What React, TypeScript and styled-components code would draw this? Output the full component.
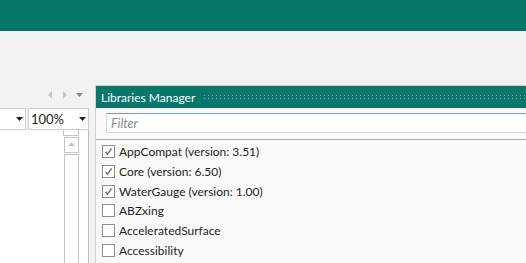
import * as React from 'react'
import styled, { createGlobalStyle } from 'styled-components'

const libraries = [
  { name: 'AppCompat (version: 3.51)', checked: true },
  { name: 'Core (version: 6.50)', checked: true },
  { name: 'WaterGauge (version: 1.00)', checked: true },
  { name: 'ABZxing', checked: false },
  { name: 'AcceleratedSurface', checked: false },
  { name: 'Accessibility', checked: false }
]

const Check: React.FC = () => (
  <svg width="11" height="11" viewBox="0 0 11 11">
    <path d="M2.5 5.8 L4.5 8.2 L8.6 2.4" fill="none" stroke="#777777" strokeWidth="1.6" />
  </svg>
)

const Triangle: React.FC<{ dir: 'left' | 'right' | 'down' | 'up'; color: string; size?: number }> = ({
  dir,
  color,
  size = 7
}) => {
  const pts = {
    left: '5,0 5,8 1,4',
    right: '1,0 1,8 5,4',
    down: '0,2 7,2 3.5,6',
    up: '0,5 7,5 3.5,1.5'
  }[dir]
  return (
    <svg width={size} height="8" viewBox={`0 0 ${size} 8`}>
      <polygon points={pts} fill={color} />
    </svg>
  )
}

const App: React.FC = () => {
  return (
    <>
      <Global />
      <Page>
        <Header />
        <Body>
          <LeftColumn>
            <NavRow>
              <NavButton>
                <Triangle dir="left" color="#c6c6c6" size={6} />
              </NavButton>
              <NavButton>
                <Triangle dir="right" color="#c6c6c6" size={6} />
              </NavButton>
              <NavButton>
                <Triangle dir="down" color="#8a8a8a" />
              </NavButton>
            </NavRow>
            <ComboRow>
              <Combo grow>
                <ComboText />
                <Triangle dir="down" color="#1e1e1e" />
              </Combo>
              <Combo>
                <ComboText>100%</ComboText>
                <Triangle dir="down" color="#1e1e1e" />
              </Combo>
            </ComboRow>
            <Editor>
              <ScrollBar>
                <ScrollGrip />
                <ScrollButton>
                  <Triangle dir="up" color="#c2c2c2" />
                </ScrollButton>
                <ScrollTrack />
              </ScrollBar>
            </Editor>
          </LeftColumn>
          <Panel>
            <TitleBar>
              <Title>Libraries Manager</Title>
              <Grip />
            </TitleBar>
            <FilterArea>
              <FilterInput placeholder="Filter" />
            </FilterArea>
            <List>
              {libraries.map((lib) => (
                <Item key={lib.name}>
                  <Box>{lib.checked && <Check />}</Box>
                  <ItemLabel>{lib.name}</ItemLabel>
                </Item>
              ))}
            </List>
          </Panel>
        </Body>
      </Page>
    </>
  )
}

const Global = createGlobalStyle`
  html, body {
    margin: 0;
    padding: 0;
    overflow: hidden;
  }
  body {
    font-family: Lato, "Noto Sans", sans-serif;
  }
`

const Page = styled.div`
  width: 526px;
  height: 263px;
  display: flex;
  flex-direction: column;
  background: #f2f2f2;
  overflow: hidden;
`

const Header = styled.div`
  height: 31px;
  background: #08766a;
  flex-shrink: 0;
`

const Body = styled.div`
  flex: 1;
  display: flex;
  padding-top: 54px;
  min-height: 0;
`

const LeftColumn = styled.div`
  width: 89px;
  display: flex;
  flex-direction: column;
  flex-shrink: 0;
`

const NavRow = styled.div`
  height: 19px;
  display: flex;
  justify-content: flex-end;
  align-items: center;
  padding-right: 2px;
`

const NavButton = styled.div`
  width: 15px;
  height: 15px;
  display: flex;
  align-items: center;
  justify-content: center;
`

const ComboRow = styled.div`
  margin-top: 4px;
  height: 22px;
  display: flex;
  gap: 2px;
  margin-left: -2px;
`

const Combo = styled.div<{ grow?: boolean }>`
  flex: ${(p) => (p.grow ? 1 : '0 0 61px')};
  height: 22px;
  box-sizing: border-box;
  border: 1px solid #cccccc;
  background: #ffffff;
  display: flex;
  align-items: center;
  padding: 0 2px;
`

const ComboText = styled.span`
  flex: 1;
  font-size: 13px;
  color: #1e1e1e;
`

const Editor = styled.div`
  flex: 1;
  background: #ffffff;
  border-right: 1px solid #bdbdbd;
  display: flex;
  justify-content: flex-end;
  padding-right: 9px;
`

const ScrollBar = styled.div`
  width: 16px;
  display: flex;
  flex-direction: column;
  align-items: center;
`

const ScrollGrip = styled.div`
  width: 16px;
  height: 6px;
  box-sizing: border-box;
  border: 1px solid #c4c4c4;
  border-top: none;
  background: #ffffff;
`

const ScrollButton = styled.div`
  margin-top: 1px;
  width: 15px;
  height: 16px;
  box-sizing: border-box;
  border: 1px solid #c4c4c4;
  display: flex;
  align-items: center;
  justify-content: center;
`

const ScrollTrack = styled.div`
  margin-top: 1px;
  width: 15px;
  flex: 1;
  box-sizing: border-box;
  border: 1px solid #c4c4c4;
  border-bottom: none;
`

const Panel = styled.div`
  flex: 1;
  margin-left: 6px;
  display: flex;
  flex-direction: column;
  border-top: 1px solid #cfcfcf;
  border-left: 1px solid #cfcfcf;
  background: #f9f9f9;
`

const TitleBar = styled.div`
  height: 22px;
  background: #08766a;
  display: flex;
  align-items: center;
  padding-left: 5px;
`

const Title = styled.span`
  color: #ffffff;
  font-size: 12px;
  white-space: nowrap;
`

const Grip = styled.div`
  flex: 1;
  height: 4px;
  margin-left: 9px;
  background-image: radial-gradient(circle at 0.5px 0.5px, #6fb4aa 0.8px, transparent 0.8px);
  background-size: 4px 3px;
`

const FilterArea = styled.div`
  padding: 5px 0 6px 10px;
  border-bottom: 1px solid #a8a8a8;
`

const FilterInput = styled.input`
  display: block;
  width: 100%;
  height: 20px;
  box-sizing: border-box;
  border: 1px solid #c6dff0;
  border-top-color: #6e9ec4;
  border-right: none;
  background: #ffffff;
  padding: 0 4px;
  font-family: Lato, "Noto Sans", sans-serif;
  font-size: 12.5px;
  outline: none;

  &::placeholder {
    color: #8a8a8a;
    font-style: italic;
  }
`

const List = styled.div`
  padding: 2px 0 0 6px;
  display: flex;
  flex-direction: column;
`

const Item = styled.div`
  height: 19.7px;
  display: flex;
  align-items: center;
`

const Box = styled.div`
  width: 13px;
  height: 13px;
  box-sizing: border-box;
  border: 1px solid #8e8e8e;
  background: #ffffff;
  display: flex;
  align-items: center;
  justify-content: center;
`

const ItemLabel = styled.span`
  margin-left: 4px;
  font-size: 12px;
  color: #1e1e1e;
  white-space: nowrap;
`

export default App
